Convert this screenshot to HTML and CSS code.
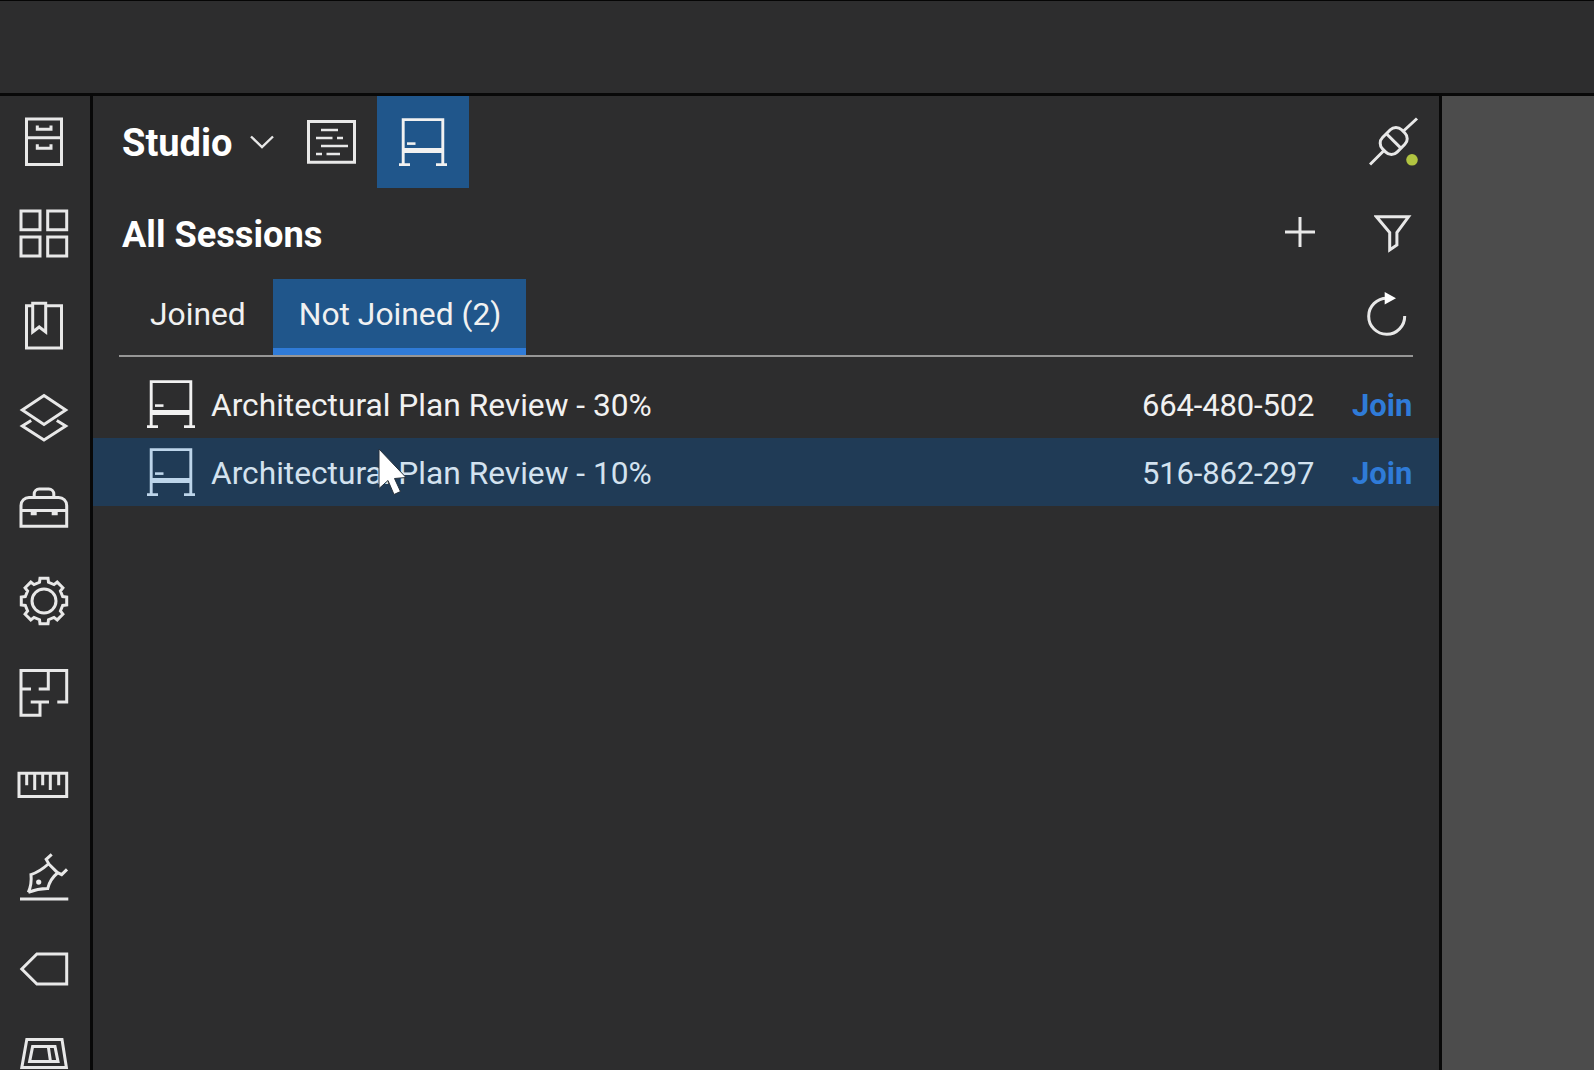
FILE: index.html
```
<!DOCTYPE html>
<html lang="en">
<head>
<meta charset="utf-8">
<title>Studio</title>
<link rel="stylesheet" href="styles.css">
</head>
<body>
<svg width="0" height="0" class="sprite">
  <symbol id="board" viewBox="0 0 48 48">
    <path d="M4.2 46V1.6H43.8V46M0 46.7H11M37 46.7H48" fill="none" stroke="currentColor" stroke-width="2.9"/>
    <path d="M4 32.4H44" stroke="currentColor" stroke-width="5"/>
    <path d="M8 25.6H16.5" stroke="currentColor" stroke-width="2.6"/>
  </symbol>
</svg>
<div class="app">
  <header class="topbar"></header>
  <div class="workspace">
    <nav class="rail">
      <a class="rail-item"><svg viewBox="0 0 60 60"><path d="M12.5 7H47.5V52.5H12.5ZM12.5 25.7H47.5M23.3 13.5V17.3H37V13.5M23.3 32.3V36.3H37V32.3"/></svg></a>
      <a class="rail-item"><svg viewBox="0 0 60 60"><path d="M7 7H26V25.7H7ZM33.7 7H52.7V25.7H33.7ZM7 33H26V52H7ZM33.7 33H52.7V52H33.7Z"/></svg></a>
      <a class="rail-item"><svg viewBox="0 0 60 60"><path d="M18.7 9.8H12.5V52.1H47.5V9.8H31.7M18.7 36V7.3H31.7V36L25.2 31Z"/></svg></a>
      <a class="rail-item"><svg viewBox="0 0 60 60"><path d="M30 7.6L51.7 22L30 36.4L8.3 22ZM17.2 32.4L8.3 38L30 52L51.7 38L42.8 32.4"/></svg></a>
      <a class="rail-item"><svg viewBox="0 0 60 60"><path d="M7 47.3V26.4A8 8 0 0 1 15 18.4H44.7A8 8 0 0 1 52.7 26.4V47.3ZM20.2 18.4V15A5 5 0 0 1 25.2 10H34.8A5 5 0 0 1 39.8 15V18.4M7 31.6H52.7"/><path class="thick" d="M16.7 33.9H22.7M37.7 33.9H43.7"/></svg></a>
      <a class="rail-item"><svg viewBox="0 0 60 60"><g transform="translate(30 30)"><circle r="12"/><path d="M-4.5 -18.7L-4 -22.7H4L4.5 -18.7L10 -16.4L13.2 -18.9L18.9 -13.2L16.4 -10L18.7 -4.5L22.7 -4V4L18.7 4.5L16.4 10L18.9 13.2L13.2 18.9L10 16.4L4.5 18.7L4 22.7H-4L-4.5 18.7L-10 16.4L-13.2 18.9L-18.9 13.2L-16.4 10L-18.7 4.5L-22.7 4V-4L-18.7 -4.5L-16.4 -10L-18.9 -13.2L-13.2 -18.9L-10 -16.4Z"/></g></svg></a>
      <a class="rail-item"><svg viewBox="0 0 60 60"><path d="M43.3 39.1H52.7V7.5H7V52.3H26V39.1M16.7 39.1H35M34.3 7.5V26.1H24.7M7 26.1H17"/></svg></a>
      <a class="rail-item"><svg viewBox="0 0 60 60"><path d="M5 18.2H52.7V41.5H5ZM12.7 18V30.3M20.7 18V35M28.7 18V30.3M36.3 18V35M44.7 18V30.3"/></svg></a>
      <a class="rail-item"><svg viewBox="0 0 60 60"><path d="M6 52.1H54.3M14.3 45.4Q18 37 17 27.6Q26 24.5 34.3 17M43.5 26Q36 32 33.7 41.6Q24 41.5 14.3 45.4M37.7 7.4L32.2 12.4L35 17.2L43.2 25.4L47.7 27.6L53 22.4"/><circle class="solid" cx="24.7" cy="35.1" r="2.6"/></svg></a>
      <a class="rail-item"><svg viewBox="0 0 60 60"><path d="M7.8 30L22.9 15H52.7V45H22.9Z"/></svg></a>
      <a class="rail-item"><svg viewBox="0 0 60 60"><path d="M12.8 8.4H48L52.4 36.6H7.8ZM18.6 15.6H41L44 30.6H15.6ZM34.3 15.6L36.5 30.6"/></svg></a>
    </nav>
    <main class="panel">
      <div class="panel-head">
        <h1 class="title">Studio</h1>
        <svg class="chevron" viewBox="0 0 24 14"><path d="M1 1.5L12 12L23 1.5"/></svg>
        <button class="mode"><svg class="list-icon" viewBox="0 0 49 44"><path d="M1.5 1.5H47.5V42.3H1.5Z"/><path d="M14 10H31M9 18H25.5M30 18H36M14 26H41M9 34H15M19.5 34H33" /></svg></button>
        <button class="mode active"><svg class="board"><use href="#board"/></svg></button>
        <svg class="plug" viewBox="0 0 50 50"><path d="M1 47.5L14.5 34M34.5 14L48 1.5"/><rect x="11.2" y="13.6" width="27" height="20.6" rx="8" transform="rotate(-45 24.7 23.9)"/><path d="M17.7 17L31.6 30.9"/><circle cx="43" cy="42.8" r="5.8"/></svg>
      </div>
      <div class="section-head">
        <h2 class="subtitle">All Sessions</h2>
        <svg class="plus" viewBox="0 0 30 30"><path d="M0 15H30M15 0V30"/></svg>
        <svg class="funnel" viewBox="0 0 38 38"><path d="M2.5 1.8H34.5L22.9 17.5V30L15.7 35V17.5Z"/></svg>
      </div>
      <div class="tabs">
        <a class="tab">Joined</a>
        <a class="tab selected">Not Joined (2)</a>
        <svg class="refresh" viewBox="0 0 40 46"><path d="M20 7.3A18 18 0 1 0 37.7 25"/><path class="tip" d="M17.7 1L29 7.3L17.7 13.6Z"/></svg>
      </div>
      <div class="sessions">
        <div class="row">
          <svg class="board"><use href="#board"/></svg>
          <span class="name">Architectural Plan Review - 30%</span>
          <span class="code">664-480-502</span>
          <a class="join">Join</a>
        </div>
        <div class="row hover">
          <svg class="board"><use href="#board"/></svg>
          <span class="name">Architectural Plan Review - 10%</span>
          <span class="code">516-862-297</span>
          <a class="join">Join</a>
        </div>
      </div>
    </main>
    <div class="canvas"></div>
  </div>
</div>
<svg class="cursor" viewBox="0 0 30 48"><path d="M1 1V40.5L10 32.5L16 46.5L22.5 43.5L16.5 30.5L28 29.5Z"/></svg>
</body>
</html>
```
FILE: styles.css
```
* { box-sizing: border-box; }
body { margin: 0; background: #2d2d2e; color: #f1f1f1; font-family: Roboto, "Liberation Sans", sans-serif; overflow: hidden; }
svg { display: block; flex: none; fill: none; stroke: #e8e8e8; stroke-width: 3; }
.sprite { position: absolute; }
.app { height: 100vh; display: flex; flex-direction: column; }
.topbar { height: 96px; flex: none; border-top: 1px solid #050505; border-bottom: 3px solid #080808; }
.workspace { flex: 1; min-height: 0; display: flex; }

.rail { width: 93px; flex: none; border-right: 3px solid #080808; padding-right: 2px; overflow: hidden; }
.rail-item { display: flex; height: 91.86px; align-items: center; justify-content: center; }
.rail-item svg { width: 60px; height: 60px; }
.rail-item .thick { stroke-width: 4.5; }
.rail-item .solid { fill: #ececec; stroke: none; }

.panel { width: 1349px; flex: none; border-right: 3px solid #080808; }
.panel-head { display: flex; height: 92px; align-items: center; padding-left: 29px; }
.title, .subtitle { margin: 0; font-weight: 700; color: #fff; }
.title { width: 128px; padding-top: 2px; font-size: 38px; line-height: 44px; white-space: nowrap; }
.chevron { width: 24px; height: 14px; stroke-width: 2.4; }
.mode { display: flex; width: 92px; height: 92px; padding: 0; border: 0; background: none; align-items: center; justify-content: center; }
.chevron + .mode { margin-left: 11px; }
.mode.active { background: #20568b; }
.list-icon { width: 49px; height: 44px; }
.list-icon path + path { stroke-width: 2.5; }
.board { width: 48px; height: 48px; color: #f1f1f1; stroke: none; }
.plug { width: 50px; height: 50px; margin: 0 20px 0 auto; }
.plug circle { fill: #b1c441; stroke: none; }

.section-head { display: flex; height: 91px; align-items: center; padding: 0 27px 0 29px; }
.subtitle { flex: 1; padding-top: 2px; font-size: 36.2px; line-height: 44px; }
.plus { width: 30px; height: 30px; margin: 0 59px 3px 0; }
.funnel { width: 38px; height: 38px; }

.tabs { display: flex; height: 78px; margin: 0 26px; border-bottom: 2px solid #969696; align-items: stretch; font-size: 31.8px; line-height: 71px; }
.tab { padding: 0 27px 0 31px; white-space: nowrap; }
.tab.selected { flex: none; width: 253px; padding: 0 0 0 26px; background: #20568b; border-bottom: 7px solid #2f7bd8; }
.refresh { width: 40px; height: 46px; margin: 12px 6px 0 auto; }
.refresh .tip { fill: #fff; stroke: none; }

.sessions { padding-top: 13px; }
.row { display: flex; height: 68px; align-items: center; padding: 0 26px 0 54px; font-size: 31px; line-height: 40px; white-space: nowrap; }
.name, .code, .join { padding-top: 4px; }
.name { flex: 1; margin-left: 16px; font-size: 31.7px; }
.code { width: 172px; letter-spacing: -0.15px; }
.join { width: 61px; margin-left: 38px; color: #2f7bd8; font-weight: 700; }
.row.hover { background: #203b56; color: #d3e2ef; }
.row.hover .board { color: #bdd5ea; }
.canvas { flex: 1; background: #4c4c4c; }

.cursor { position: absolute; left: 378px; top: 448px; width: 30px; height: 48px; fill: #fff; stroke: #26313c; stroke-width: 1; }
```
